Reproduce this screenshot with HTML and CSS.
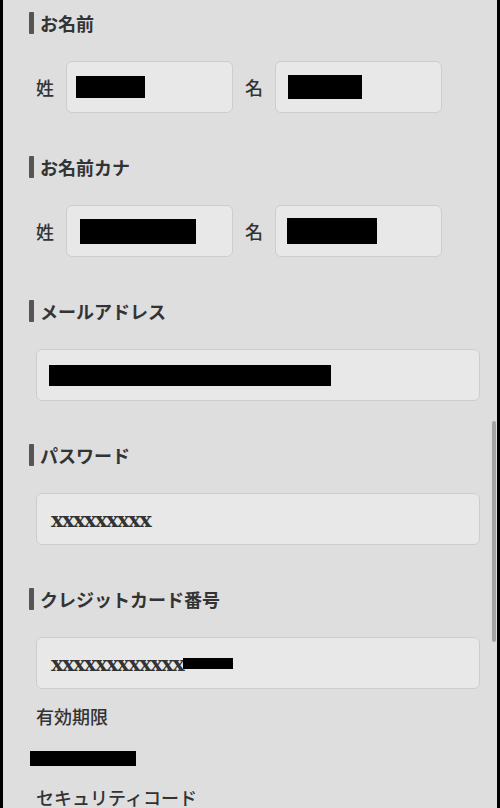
FILE: index.html
```html
<!DOCTYPE html>
<html lang="ja">
<head>
  <meta charset="UTF-8">
  <meta name="viewport" content="width=device-width, initial-scale=1.0">
  <title>会員登録</title>
  <link rel="stylesheet" href="styles.css">
</head>
<body>
  <div class="page">
    <div class="section">
      <h2 class="heading">お名前</h2>
      <div class="name-row">
        <span class="name-label">姓</span>
        <div class="field"><span class="redact" style="width:69px;height:22px;margin-left:-5px"></span></div>
        <span class="name-label">名</span>
        <div class="field"><span class="redact" style="width:74px;height:24px;margin-left:-2px"></span></div>
      </div>
    </div>

    <div class="section">
      <h2 class="heading">お名前カナ</h2>
      <div class="name-row">
        <span class="name-label">姓</span>
        <div class="field"><span class="redact" style="width:116px;height:25px;margin-left:-1px"></span></div>
        <span class="name-label">名</span>
        <div class="field"><span class="redact" style="width:90px;height:26px;margin-left:-3px"></span></div>
      </div>
    </div>

    <div class="section">
      <h2 class="heading">メールアドレス</h2>
      <div class="field wide"><span class="redact" style="width:282px;height:21px;margin-left:-2px"></span></div>
    </div>

    <div class="section">
      <h2 class="heading">パスワード</h2>
      <div class="field wide"><span class="mask">xxxxxxxxx</span></div>
    </div>

    <div class="section last">
      <h2 class="heading">クレジットカード番号</h2>
      <div class="field wide"><span class="mask">xxxxxxxxxxxx</span><span class="redact" style="width:50px;height:11px"></span></div>
      <p class="sub-label">有効期限</p>
      <div class="expiry"><span class="redact" style="width:106px;height:15px"></span></div>
      <p class="sub-label">セキュリティコード</p>
    </div>

    <div class="scroll-thumb"></div>
  </div>
</body>
</html>
```

FILE: styles.css
```css
html, body {
  margin: 0;
  padding: 0;
  background: #000;
}
.page {
  position: relative;
  width: 500px;
  height: 808px;
  overflow: hidden;
  margin: 0;
  padding-top: 11px;
  box-sizing: border-box;
  border-left: 3px solid #000;
  border-right: 3px solid #000;
  background: #dedede;
  font-family: "Noto Sans CJK JP", "Noto Sans", sans-serif;
  color: #333;
}
.section {
  margin-bottom: 42px;
}
.heading {
  display: flex;
  align-items: center;
  height: 24px;
  margin: 0 0 26px 26px;
  font-size: 18px;
  font-weight: 700;
  line-height: 24px;
  color: #333;
}
.heading::before {
  content: "";
  width: 5px;
  height: 22px;
  margin-right: 6px;
  background: #555;
  border-radius: 1px;
}
.name-row {
  display: flex;
  align-items: center;
  gap: 12px;
  margin-left: 33px;
}
.name-label {
  width: 18px;
  font-size: 18px;
  font-weight: 500;
}
.field {
  display: flex;
  align-items: center;
  box-sizing: border-box;
  width: 167px;
  height: 52px;
  padding-left: 14px;
  background: #e8e8e8;
  border: 1px solid #cdcdcd;
  border-radius: 6px;
}
.field.wide {
  width: 444px;
  margin-left: 33px;
}
.redact {
  display: inline-block;
  background: #000;
}
.mask {
  font-family: "DejaVu Serif", serif;
  font-weight: 700;
  font-size: 21px;
  letter-spacing: -1.5px;
  color: #333;
}
.sub-label {
  margin: 15px 0 0 33px;
  font-size: 18px;
  font-weight: 500;
  line-height: 24px;
}
.expiry {
  height: 15px;
  margin: 23px 0 0 27px;
}
.expiry .redact {
  display: block;
}
.last .sub-label + .expiry + .sub-label {
  margin-top: 19px;
}
.scroll-thumb {
  position: absolute;
  top: 421px;
  left: 489px;
  width: 4px;
  height: 221px;
  border-radius: 2px;
  background: #a4a4a4;
}
```
